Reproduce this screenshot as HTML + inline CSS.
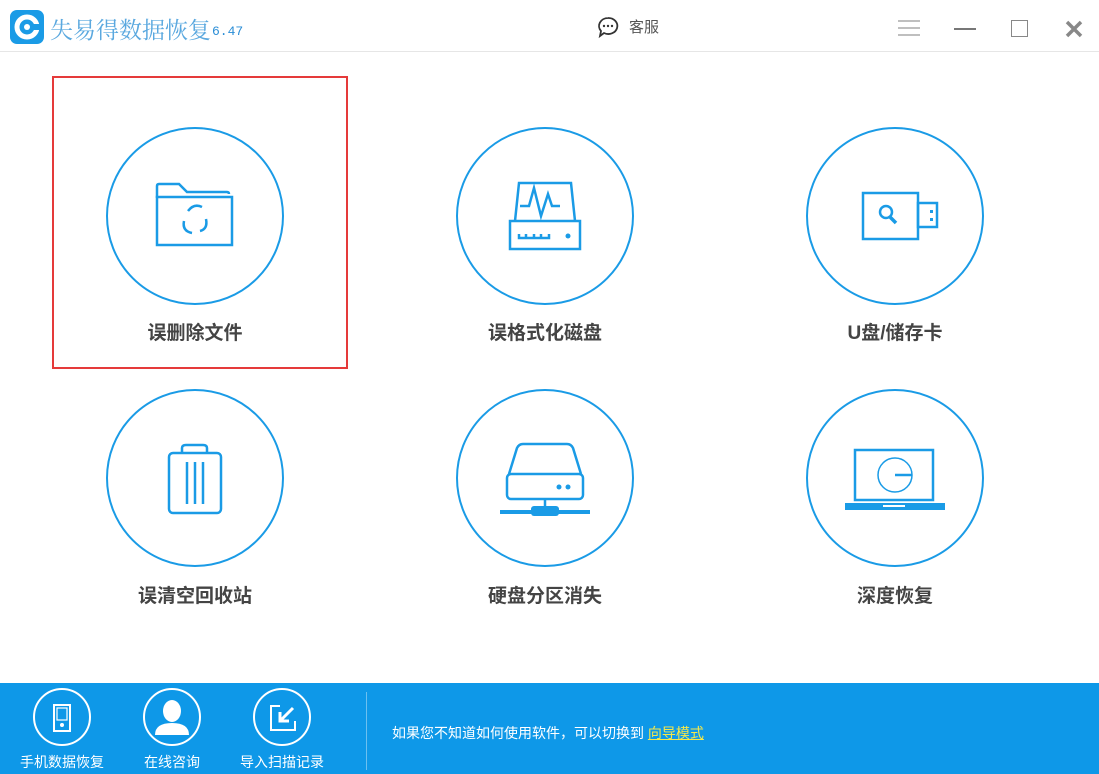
<!DOCTYPE html>
<html><head><meta charset="utf-8"><style>
*{margin:0;padding:0;box-sizing:border-box}
body{width:1099px;height:774px;overflow:hidden;background:#fff;font-family:"Liberation Sans","Noto Sans CJK SC",sans-serif;position:relative}
.abs{position:absolute}
.lbl{position:absolute;width:200px;text-align:center;font-size:19px;font-weight:bold;color:#444}
.circ{position:absolute;width:178px;height:178px;border:2.5px solid #1a9be6;border-radius:50%}
.fl{position:absolute;width:110px;text-align:center;font-size:14px;color:#fff;top:752px}
.fc{position:absolute;width:58px;height:58px;border:2px solid #fff;border-radius:50%;top:688px}
</style></head><body>
<div class="abs" style="left:0;top:0;width:1099px;height:52px;background:#fff;border-bottom:1px solid #e6e6e6"></div>
<svg class="abs" style="left:10px;top:10px" width="34" height="34" viewBox="0 0 34 34"><rect width="34" height="34" rx="7" fill="#1a9be6"/><circle cx="17" cy="17" r="10" fill="none" stroke="#fff" stroke-width="5"/><rect x="22" y="14" width="8" height="6" fill="#1a9be6"/><circle cx="17" cy="17" r="3" fill="#fff"/></svg>
<div class="abs" style="left:50px;top:12px;font-size:23px;color:#5aa8df;font-family:'Noto Serif CJK SC',serif">失易得数据恢复</div>
<div class="abs" style="left:212px;top:24px;font-size:13px;color:#2a8dd6;font-family:'Liberation Mono',monospace">6.47</div>
<svg class="abs" style="left:596px;top:15px" width="24" height="24" viewBox="0 0 24 24"><path d="M12 3a9 8 0 1 1-4 15l-4 3 1-5A9 8 0 0 1 12 3z" fill="none" stroke="#333" stroke-width="1.8"/><circle cx="8" cy="11" r="1.2" fill="#333"/><circle cx="12" cy="11" r="1.2" fill="#333"/><circle cx="16" cy="11" r="1.2" fill="#333"/></svg>
<div class="abs" style="left:629px;top:16px;font-size:15px;color:#555">客服</div>
<svg class="abs" style="left:897px;top:18px" width="24" height="20"><path d="M1 3h22M1 10h22M1 17h22" stroke="#aaa" stroke-width="1.5"/></svg>
<div class="abs" style="left:954px;top:28px;width:22px;height:2px;background:#777"></div>
<div class="abs" style="left:1011px;top:20px;width:17px;height:17px;border:1.5px solid #888"></div>
<svg class="abs" style="left:1064px;top:19px" width="20" height="20"><path d="M3 3L17 17M17 3L3 17" stroke="#888" stroke-width="3.5"/></svg>

<div class="abs" style="left:52px;top:76px;width:296px;height:293px;border:2px solid #e53a3a"></div>

<div class="circ" style="left:106px;top:127px"></div>
<div class="circ" style="left:456px;top:127px"></div>
<div class="circ" style="left:806px;top:127px"></div>
<div class="circ" style="left:106px;top:389px"></div>
<div class="circ" style="left:456px;top:389px"></div>
<div class="circ" style="left:806px;top:389px"></div>

<svg class="abs" style="left:150px;top:178px" width="90" height="72" viewBox="0 0 90 72"><g fill="none" stroke="#1a9be6" stroke-width="2.5"><path d="M7 20V8q0-2 2-2h20l8 8h40q2 0 2 2"/><rect x="7" y="19" width="75" height="48"/><path d="M38 33q6-8 14-4M56 41q2 10-6 12M42 55q-10-2-8-12"/></g></svg>
<svg class="abs" style="left:505px;top:178px" width="80" height="78" viewBox="0 0 80 78"><g fill="none" stroke="#1a9be6" stroke-width="2.5"><path d="M10 43L14 5h52l4 38"/><rect x="5" y="43" width="70" height="28"/><path d="M15 28h9l5-18 7 28 7-22 4 12h8"/><path d="M14 56v4h30v-4M21 56v4M29 56v4M36 56v4"/></g><circle cx="63" cy="58" r="2.5" fill="#1a9be6"/></svg>
<svg class="abs" style="left:860px;top:190px" width="80" height="52" viewBox="0 0 80 52"><g fill="none" stroke="#1a9be6" stroke-width="2.5"><rect x="3" y="3" width="55" height="46"/><rect x="58" y="13" width="19" height="24"/><circle cx="26" cy="22" r="6"/><path d="M30 27l6 6" stroke-width="3.5"/></g><rect x="70" y="20" width="3" height="3" fill="#1a9be6"/><rect x="70" y="28" width="3" height="3" fill="#1a9be6"/></svg>
<svg class="abs" style="left:165px;top:442px" width="60" height="76" viewBox="0 0 60 76"><g fill="none" stroke="#1a9be6" stroke-width="2.5"><rect x="4" y="11" width="52" height="60" rx="4"/><path d="M17 11V6q0-3 4-3h17q4 0 4 3v5"/><path d="M22 20v42M30 20v42M38 20v42"/></g></svg>
<svg class="abs" style="left:497px;top:440px" width="96" height="80" viewBox="0 0 96 80"><g fill="none" stroke="#1a9be6" stroke-width="2.5"><path d="M12 34L20 8q2-4 6-4h44q4 0 6 4l8 26"/><rect x="10" y="34" width="76" height="25" rx="4"/><path d="M48 59v10"/></g><circle cx="62" cy="47" r="2.5" fill="#1a9be6"/><circle cx="71" cy="47" r="2.5" fill="#1a9be6"/><rect x="3" y="70" width="90" height="4" fill="#1a9be6"/><rect x="34" y="66" width="28" height="10" rx="3" fill="#1a9be6"/></svg>
<svg class="abs" style="left:843px;top:446px" width="104" height="68" viewBox="0 0 104 68"><g fill="none" stroke="#1a9be6"><rect x="12" y="4" width="78" height="50" stroke-width="2.5"/><circle cx="52" cy="29" r="17" stroke-width="1.5"/><path d="M52 29h17" stroke-width="2.5"/></g><rect x="2" y="57" width="100" height="7" fill="#1a9be6"/><rect x="40" y="59" width="22" height="2" fill="#fff"/></svg>

<div class="lbl" style="left:95px;top:318px">误删除文件</div>
<div class="lbl" style="left:445px;top:318px">误格式化磁盘</div>
<div class="lbl" style="left:795px;top:318px">U盘/储存卡</div>
<div class="lbl" style="left:95px;top:581px">误清空回收站</div>
<div class="lbl" style="left:445px;top:581px">硬盘分区消失</div>
<div class="lbl" style="left:795px;top:581px">深度恢复</div>

<div class="abs" style="left:0;top:683px;width:1099px;height:91px;background:#0e98e8"></div>
<div class="fc" style="left:33px"></div>
<div class="fc" style="left:143px"></div>
<div class="fc" style="left:253px"></div>
<svg class="abs" style="left:52px;top:703px" width="20" height="30"><rect x="2" y="2" width="16" height="26" fill="none" stroke="#fff" stroke-width="2"/><rect x="5" y="5" width="10" height="12" fill="none" stroke="#fff" stroke-width="1.2"/><circle cx="10" cy="22" r="2" fill="#fff"/></svg>
<svg class="abs" style="left:152px;top:697px" width="40" height="42"><ellipse cx="20" cy="14" rx="9" ry="11" fill="#fff"/><path d="M3 38q0-12 17-12t17 12z" fill="#fff"/></svg>
<svg class="abs" style="left:268px;top:703px" width="30" height="30"><path d="M12 3H3v24h24V18" fill="none" stroke="#fff" stroke-width="2"/><path d="M12 3h15v15" fill="none" stroke="#fff" stroke-width="0"/><path d="M25 5L13 17M12 9v9h9" fill="none" stroke="#fff" stroke-width="3"/></svg>
<div class="fl" style="left:7px">手机数据恢复</div>
<div class="fl" style="left:117px">在线咨询</div>
<div class="fl" style="left:227px">导入扫描记录</div>
<div class="abs" style="left:366px;top:692px;width:1px;height:78px;background:#6cc0f0"></div>
<div class="abs" style="left:392px;top:723px;font-size:14px;color:#fff">如果您不知道如何使用软件，可以切换到 <span style="color:#f5e84a;text-decoration:underline">向导模式</span></div>
</body></html>
